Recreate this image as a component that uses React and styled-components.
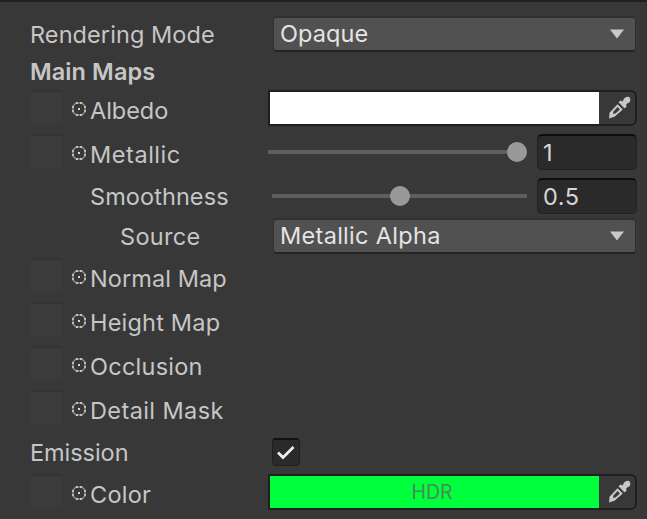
import React from "react";
import styled, { createGlobalStyle } from "styled-components";

const GlobalStyle = createGlobalStyle`
  * { box-sizing: border-box; }
  html, body { margin: 0; background: #383838; }
  body { font-family: Inter, "Liberation Sans", sans-serif; overflow: hidden; }
`;

const Panel = styled.main`
  width: 647px;
  height: 519px;
  padding: 14px 9px 0 30px;
  background: #383838;
  border-top: 2px solid #1f1f1f;
  border-right: 1px solid #343434;
  color: #c6c6c6;
  font-size: 23.5px;
`;

const Row = styled.div`
  display: flex;
  height: 36px;
  margin-bottom: ${(p) => p.$gap ?? 8}px;
`;

const Heading = styled.h2`
  height: 38px;
  margin: 0;
  font-size: 23.5px;
  line-height: 40px;
  font-weight: 600;
  letter-spacing: 0.1px;
`;

const LabelCell = styled.div`
  display: flex;
  flex: 0 0 238px;
  padding-left: ${(p) => p.$indent ?? 0}px;
`;

const Label = styled.span`
  line-height: 36px;
  padding-top: ${(p) => (p.$low ? 2 : 1)}px;
  margin-top: ${(p) => (p.$low ? 1 : 0)}px;
  height: 36px;
  white-space: nowrap;
  letter-spacing: ${(p) => p.$spacing ?? 0.08}px;
`;

const Slot = styled.div`
  width: 32px;
  height: 34px;
  margin-right: 8px;
  border-top: 2px solid #333333;
  background: #3b3b3b;
  border-radius: 2px;
`;

const PickerIcon = styled.svg`
  width: 16px;
  height: 16px;
  margin: 11px 3px 0 1px;
  flex: none;
`;

const Dropdown = styled.div`
  display: flex;
  align-items: center;
  justify-content: space-between;
  width: 363px;
  height: 36px;
  margin-left: 5px;
  padding: 0 10px 0 6px;
  border: 1px solid #303030;
  border-top-width: 2px;
  border-bottom: 2px solid #242424;
  border-radius: 4px;
  background: #515151;
  color: #e4e4e4;
  line-height: 32px;
  letter-spacing: ${(p) => p.$spacing ?? 0.3}px;
`;

const Arrow = styled.svg`
  width: 16px;
  height: 10px;
`;

const ColorField = styled.div`
  display: flex;
  flex: none;
  width: 369px;
  height: 36px;
  border: 2px solid #1f1f1f;
  border-radius: 1px 6px 6px 1px;
  overflow: hidden;
`;

const Swatch = styled.div`
  flex: none;
  width: 329px;
  background: ${(p) => p.$color};
  color: #4b8957;
  font-size: 19.5px;
  line-height: 33px;
  text-align: center;
  padding-right: 5px;
`;

const Eyedropper = styled.svg`
  flex: none;
  width: 24px;
  height: 24px;
  margin: 3px 0 0 8px;
`;

const SliderTrack = styled.div`
  display: flex;
  flex: none;
  align-items: center;
  justify-content: ${(p) => (p.$end ? "flex-end" : "center")};
  width: ${(p) => (p.$end ? 259 : 255)}px;
  height: 36px;
  margin-left: ${(p) => (p.$end ? 0 : 4)}px;
  background: linear-gradient(#5e5e5e, #5e5e5e) 0 16px / 100% 4px no-repeat;
`;

const Knob = styled.div`
  width: 20px;
  height: 20px;
  border-radius: 50%;
  background: #999999;
`;

const NumberField = styled.div`
  flex: none;
  width: 100px;
  height: 36px;
  margin-left: 10px;
  padding-left: 5px;
  border: 1px solid #222222;
  border-top: 2px solid #0e0e0e;
  border-radius: 5px;
  background: #2a2a2a;
  color: #d6d6d6;
  line-height: 34px;
  letter-spacing: 0.5px;
`;

const Checkbox = styled.div`
  width: 28px;
  height: 28px;
  margin: 4px 0 0 4px;
  border: 1px solid #202020;
  border-top: 2px solid #101010;
  border-radius: 4px;
  background: #2a2a2a;
`;

const Check = styled.svg`
  display: block;
  width: 26px;
  height: 24px;
`;

function TextureLabel({ children, spacing }) {
  return (
    <LabelCell>
      <Slot />
      <PickerIcon viewBox="0 0 16 16" fill="none">
        <path d="M5 2H11L14 5V11L11 14H5L2 11V5Z" stroke="#858585" strokeWidth="1.6" />
        <path d="M5 2H7M9 2H11M14 5V7M14 9V11M11 14H9M7 14H5M2 11V9M2 7V5" stroke="#c4c4c4" strokeWidth="1.8" />
        <rect x="7" y="7" width="2" height="2" fill="#d8d8d8" />
      </PickerIcon>
      <Label $low $spacing={spacing}>{children}</Label>
    </LabelCell>
  );
}

function Select({ children, spacing }) {
  return (
    <Dropdown $spacing={spacing}>
      {children}
      <Arrow viewBox="0 0 16 10">
        <path d="M1 .5h14L8 9.5Z" fill="#c9c9c9" />
      </Arrow>
    </Dropdown>
  );
}

function ColorInput({ color, children }) {
  return (
    <ColorField>
      <Swatch $color={color}>{children}</Swatch>
      <Eyedropper viewBox="0 0 24 24">
        <path fillRule="evenodd" d="M2 23.5 2.5 17.8 10.5 9.2 15.8 14.5 7.5 21.8ZM6 18.9 8.7 18.3 12.9 14.4 10.7 12.1 6.6 16.2Z" fill="#c8c8c8" />
        <path d="M11.5 7.2 13.5 5.5 15.7 6.4 17 3.5Q19.5 1.2 22.3 2Q24 4.5 22.8 7L19.2 9.2 19.6 11.4 17.6 13.4Z" fill="#c8c8c8" />
      </Eyedropper>
    </ColorField>
  );
}

export default function App() {
  return (
    <>
      <GlobalStyle />
      <Panel>
        <Row $gap={0}>
          <LabelCell><Label>Rendering Mode</Label></LabelCell>
          <Select spacing={0.1}>Opaque</Select>
        </Row>
        <Heading>Main Maps</Heading>
        <Row>
          <TextureLabel spacing={-0.05}>Albedo</TextureLabel>
          <ColorInput color="#ffffff" />
        </Row>
        <Row>
          <TextureLabel spacing={0.55}>Metallic</TextureLabel>
          <SliderTrack $end><Knob /></SliderTrack>
          <NumberField>1</NumberField>
        </Row>
        <Row $gap={4}>
          <LabelCell $indent={60}><Label>Smoothness</Label></LabelCell>
          <SliderTrack><Knob /></SliderTrack>
          <NumberField>0.5</NumberField>
        </Row>
        <Row $gap={4}>
          <LabelCell $indent={90}><Label $spacing={0.3}>Source</Label></LabelCell>
          <Select>Metallic Alpha</Select>
        </Row>
        <Row><TextureLabel>Normal Map</TextureLabel></Row>
        <Row><TextureLabel spacing={0.2}>Height Map</TextureLabel></Row>
        <Row><TextureLabel spacing={0.25}>Occlusion</TextureLabel></Row>
        <Row><TextureLabel spacing={0.4}>Detail Mask</TextureLabel></Row>
        <Row $gap={4}>
          <LabelCell><Label $spacing={-0.05}>Emission</Label></LabelCell>
          <Checkbox>
            <Check viewBox="0 0 26 24" fill="none">
              <path d="m5 12.5 5 5L20.5 7" stroke="#eeeeee" strokeWidth="2.7" />
            </Check>
          </Checkbox>
        </Row>
        <Row>
          <TextureLabel spacing={0.25}>Color</TextureLabel>
          <ColorInput color="#00ff3c">HDR</ColorInput>
        </Row>
      </Panel>
    </>
  );
}
